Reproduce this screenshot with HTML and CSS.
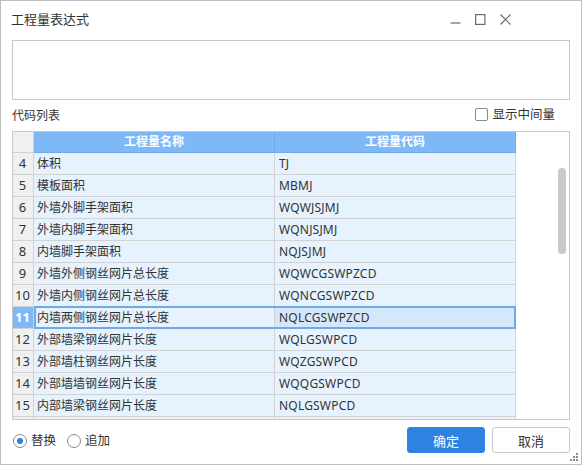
FILE: index.html
```html
<!DOCTYPE html>
<html lang="zh">
<head>
<meta charset="utf-8">
<link rel="stylesheet" href="styles.css">
</head>
<body>
<div class="window">
  <div class="titlebar">
    <span class="title">工程量表达式</span>
    <div class="controls">
      <svg class="ctl" width="11" height="11" viewBox="0 0 11 11"><path d="M0.5 9h10" stroke="#6a6a6a" stroke-width="1.2" fill="none"/></svg>
      <svg class="ctl" width="11" height="11" viewBox="0 0 11 11"><rect x="0.6" y="0.6" width="9.3" height="9.8" stroke="#6a6a6a" stroke-width="1.2" fill="none"/></svg>
      <svg class="ctl" width="11" height="11" viewBox="0 0 11 11"><path d="M0.5 0.5l10 10M10.5 0.5l-10 10" stroke="#6a6a6a" stroke-width="1.1" fill="none"/></svg>
    </div>
  </div>
  <div class="content">
    <div class="expr"></div>
    <div class="labelrow">
      <span class="label">代码列表</span>
      <label class="check"><span class="box"></span>显示中间量</label>
    </div>
    <div class="tablebox">
      <div class="grid">
        <div class="row head">
          <div class="c num"></div>
          <div class="c name">工程量名称</div>
          <div class="c code">工程量代码</div>
        </div>
        <div class="row"><div class="c num">4</div><div class="c name">体积</div><div class="c code">TJ</div></div>
        <div class="row"><div class="c num">5</div><div class="c name">模板面积</div><div class="c code">MBMJ</div></div>
        <div class="row"><div class="c num">6</div><div class="c name">外墙外脚手架面积</div><div class="c code">WQWJSJMJ</div></div>
        <div class="row"><div class="c num">7</div><div class="c name">外墙内脚手架面积</div><div class="c code">WQNJSJMJ</div></div>
        <div class="row"><div class="c num">8</div><div class="c name">内墙脚手架面积</div><div class="c code">NQJSJMJ</div></div>
        <div class="row"><div class="c num">9</div><div class="c name">外墙外侧钢丝网片总长度</div><div class="c code">WQWCGSWPZCD</div></div>
        <div class="row"><div class="c num">10</div><div class="c name">外墙内侧钢丝网片总长度</div><div class="c code">WQNCGSWPZCD</div></div>
        <div class="row sel"><div class="c num">11</div><div class="c name">内墙两侧钢丝网片总长度</div><div class="c code">NQLCGSWPZCD</div></div>
        <div class="row"><div class="c num">12</div><div class="c name">外部墙梁钢丝网片长度</div><div class="c code">WQLGSWPCD</div></div>
        <div class="row"><div class="c num">13</div><div class="c name">外部墙柱钢丝网片长度</div><div class="c code">WQZGSWPCD</div></div>
        <div class="row"><div class="c num">14</div><div class="c name">外部墙墙钢丝网片长度</div><div class="c code">WQQGSWPCD</div></div>
        <div class="row"><div class="c num">15</div><div class="c name">内部墙梁钢丝网片长度</div><div class="c code">NQLGSWPCD</div></div>
        <div class="row"><div class="c num"></div><div class="c name"></div><div class="c code"></div></div>
      </div>
      <div class="scroll"><div class="thumb"></div></div>
    </div>
    <div class="footer">
      <div class="radios">
        <label class="radio"><span class="dot on"></span>替换</label>
        <label class="radio"><span class="dot"></span>追加</label>
      </div>
      <div class="buttons">
        <button class="btn primary">确定</button>
        <button class="btn">取消</button>
      </div>
    </div>
  </div>
  <svg class="grip" width="8" height="8" viewBox="0 0 8 8">
    <rect x="6" y="0" width="2" height="2" fill="#8a8a8a"/>
    <rect x="3" y="3" width="2" height="2" fill="#8a8a8a"/>
    <rect x="6" y="3" width="2" height="2" fill="#8a8a8a"/>
    <rect x="0" y="6" width="2" height="2" fill="#8a8a8a"/>
    <rect x="3" y="6" width="2" height="2" fill="#8a8a8a"/>
    <rect x="6" y="6" width="2" height="2" fill="#8a8a8a"/>
  </svg>
</div>
</body>
</html>
```
FILE: styles.css
```css
*, *::before, *::after { box-sizing: border-box; }
html, body { margin: 0; padding: 0; background: #fff; }
body {
  font-family: "Noto Sans", "Noto Sans CJK SC", sans-serif;
  font-size: 12px;
  color: #333;
}
.window {
  position: relative;
  width: 582px;
  height: 465px;
  border: 1px solid #bdbdbd;
  background: #fff;
  display: flex;
  flex-direction: column;
}
.titlebar {
  height: 38px;
  display: flex;
  align-items: center;
  justify-content: space-between;
  padding: 0 70px 0 10px;
}
.title {
  font-size: 13px;
  line-height: 16px;
  color: #333;
  margin-top: -2px;
}
.controls {
  display: flex;
  gap: 14px;
  margin-top: -1px;
}
.ctl { display: block; width: 11px; height: 11px; }
.content {
  padding: 1px 11px 0 11px;
  display: flex;
  flex-direction: column;
}
.expr {
  height: 60px;
  border: 1px solid #c8c8c8;
}
.labelrow {
  height: 31px;
  display: flex;
  align-items: center;
  justify-content: space-between;
}
.label { line-height: 16px; }
.check {
  display: flex;
  align-items: center;
  gap: 4px;
  font-size: 12.5px;
  line-height: 16px;
  margin-right: 15px;
  margin-top: -2px;
}
.box {
  width: 13px;
  height: 13px;
  border: 1px solid #8a8a8a;
  border-radius: 2px;
  background: #fff;
}
.tablebox {
  height: 289px;
  border: 1px solid #c8c8c8;
  display: flex;
  overflow: hidden;
}
.grid { width: 503px; flex: none; }
.row { display: flex; height: 22px; position: relative; }
.c {
  border-right: 1px solid #d2d2d2;
  border-bottom: 1px solid #d2d2d2;
  line-height: 21px;
  white-space: nowrap;
  overflow: hidden;
}
.num {
  width: 21px;
  background: #f0f0f0;
  text-align: center;
  font-size: 13px;
  color: #333;
  padding-right: 1px;
}
.name, .code {
  width: 241px;
  background: #e6f2fd;
  padding-left: 3px;
}
.code { padding-left: 4px; letter-spacing: 0.2px; }
.head { height: 21px; }
.head .c { line-height: 20px; }
.head .name, .head .code {
  background: #7fb8f7;
  color: #fff;
  font-weight: bold;
  text-align: center;
  padding-left: 0;
  letter-spacing: 0;
  border-right-color: #6ea9ea;
  border-bottom-color: #6ea9ea;
}
.head .num { background: #f0f0f0; }
.sel .num {
  background: #7fb8f7;
  color: #fff;
  font-weight: bold;
}
.sel .code { background: #d5e8fb; }
.sel::after {
  content: "";
  position: absolute;
  left: 21px;
  top: -1px;
  width: 482px;
  height: 23px;
  border: 2px solid #6ea9e8;
  pointer-events: none;
}
.scroll {
  flex: 1;
  padding-top: 36px;
  display: flex;
  justify-content: flex-end;
  padding-right: 3px;
}
.thumb {
  width: 8px;
  height: 86px;
  border-radius: 4px;
  background: #c9c9c9;
}
.footer {
  display: flex;
  justify-content: space-between;
  align-items: center;
  padding-top: 7px;
}
.radios {
  display: flex;
  gap: 11px;
  margin-left: 1px;
  margin-top: 1px;
}
.radio {
  display: flex;
  align-items: center;
  gap: 4px;
  font-size: 12.5px;
  line-height: 16px;
}
.dot {
  width: 14px;
  height: 14px;
  border: 1px solid #8a8a8a;
  border-radius: 50%;
  background: #fff;
  position: relative;
}
.dot.on::after {
  content: "";
  position: absolute;
  left: 3px;
  top: 3px;
  width: 6px;
  height: 6px;
  border-radius: 50%;
  background: #2b7fe0;
}
.buttons { display: flex; gap: 7px; }
.btn {
  width: 78px;
  height: 26px;
  border-radius: 3px;
  border: 1px solid #c8c8c8;
  background: #fff;
  color: #333;
  font-family: "Noto Sans", "Noto Sans CJK SC", sans-serif;
  font-size: 13px;
  padding: 0;
}
.btn.primary {
  background: #2e82e2;
  border-color: #2e82e2;
  color: #fff;
}
.grip {
  position: absolute;
  right: 3px;
  bottom: 3px;
}
```
